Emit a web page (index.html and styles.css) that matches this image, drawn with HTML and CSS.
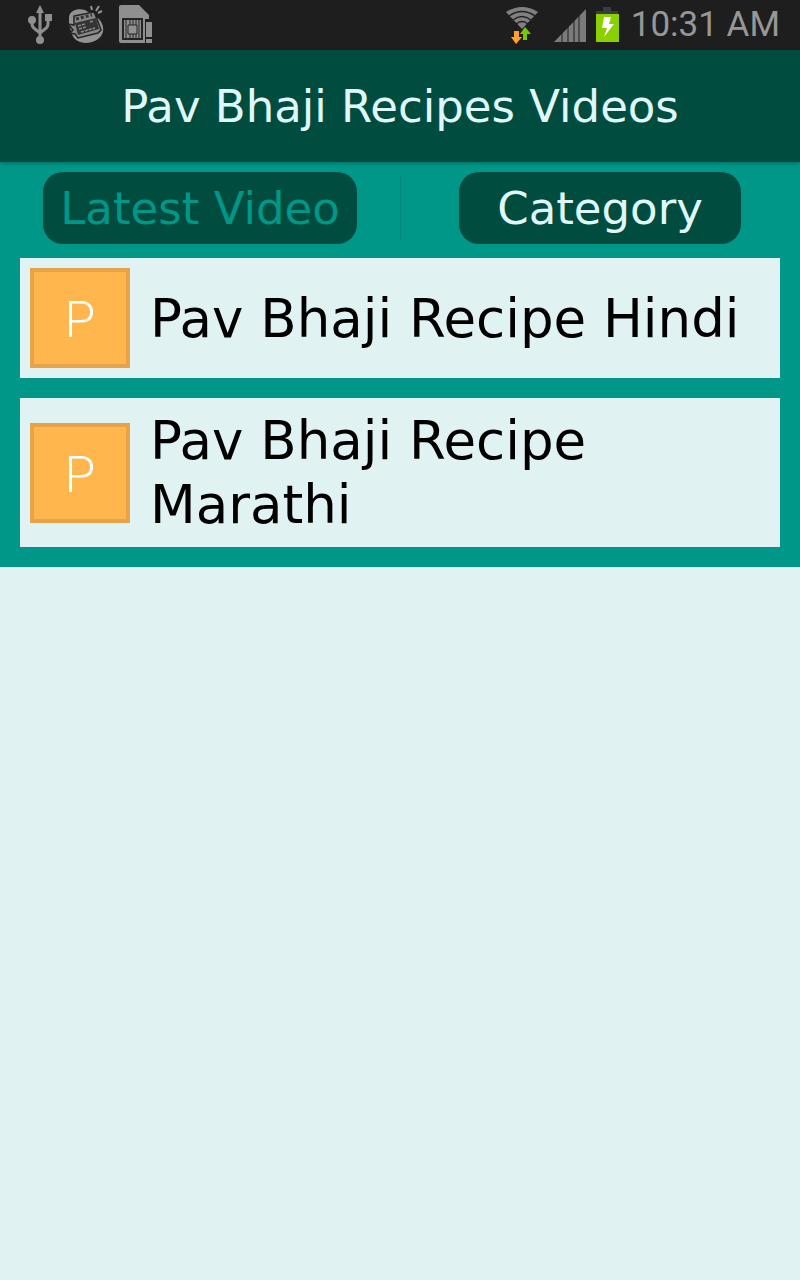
FILE: index.html
```
<!DOCTYPE html>
<html lang="en">
<head>
  <meta charset="UTF-8">
  <meta name="viewport" content="width=device-width, initial-scale=1.0">
  <title>Pav Bhaji Recipes Videos</title>
  <link rel="stylesheet" href="styles.css">
</head>
<body>
  <div class="status-bar">
    <div class="status-left">
      <!-- usb -->
      <svg width="24" height="40" viewBox="0 0 24 40" fill="#8f8f8f" stroke="#8f8f8f">
        <path d="M12 0l4 8H8z" stroke="none"/>
        <path d="M12 6v28M4 15v4q0 3 3 5l5 4M20 13v6q0 3-3 5l-5 4" fill="none" stroke-width="3"/>
        <circle cx="4" cy="15" r="4" stroke="none"/>
        <path d="M17 9h7v7h-7z" stroke="none"/>
        <circle cx="12" cy="35" r="4" stroke="none"/>
      </svg>
      <!-- newspaper -->
      <svg width="40" height="40" viewBox="0 0 40 40">
        <path d="M4 12C5 5 13 3 20 5L34 14C42 23 38 34 27 37C18 40 9 36 7 29L4 20z" fill="#929292"/>
        <path d="M9 11L29 7L32 14L36 25L33 28L13 33L10 29L5 28L8 25L3 19L9 20z" fill="#878787" stroke="#242424" stroke-width="1.5"/>
        <path d="M10 18L31 13L34 24L13 30z" fill="#343434"/>
        <path d="M11 14l16-4M13 21l7-2M14 24l7-2M16 27l14-4M25 17l4-1" stroke="#8a8a8a" stroke-width="1.5" stroke-dasharray="3 1" fill="none"/>
        <path d="M11 14l16-4" stroke="#343434" stroke-width="3" stroke-dasharray="3 2"/>
        <path d="M27 5l-1-4M31 6l3-5M33 8l4-2" stroke="#929292" stroke-width="2" fill="none"/>
      </svg>
      <!-- sim card -->
      <svg width="36" height="40" viewBox="0 0 36 40">
        <path d="M3 0h18l10 10v4h-4v24H3q-2 0-2-2V2q0-2 2-2z" fill="#8f8f8f"/>
        <path d="M5 14h19v20H5z" fill="#8f8f8f" stroke="#242424" stroke-width="2"/>
        <path d="M8 14v20M21 14v20M12 14v6M15 14v6M18 14v6M12 29v5M15 29v5M18 29v5" stroke="#242424" stroke-width="1"/>
        <path d="M10 20h9v9h-9z" fill="#929292" stroke="#242424"/>
        <path d="M28 17h6v15h-6zM28 34h6v4h-6z" fill="#8f8f8f"/>
      </svg>
    </div>
    <div class="status-right">
      <!-- wifi with traffic arrows -->
      <svg width="34" height="40" viewBox="0 0 34 40">
        <path d="M1 7q16-10 32 0L17 24z" fill="#808080"/>
        <path d="M4 11q13-9 26 0M8 15q9-7 18 0M11 19q6-5 12 0" fill="none" stroke="#1e1e1e" stroke-width="1.5"/>
        <path d="M9 26h5v6h3l-6 7-5-7h3z" fill="#ffa030"/>
        <path d="M18 35h4v-6h4l-6-7-5 7h3z" fill="#78c800"/>
      </svg>
      <!-- signal -->
      <svg class="signal" width="34" height="40" viewBox="0 0 34 40">
        <path d="M1 37L33 4v33z" fill="#7b7b7b"/>
        <path d="M9 24v14M15 18v20M21 12v26M26 6v32" stroke="#1e1e1e"/>
      </svg>
      <!-- battery -->
      <svg class="battery" width="24" height="40" viewBox="0 0 24 40">
        <path d="M8 2h8v4h7v4H1V6h7z" fill="#3c3c42"/>
        <path d="M1 9h23v28H1z" fill="#8bd000"/>
        <path d="M9 12h7l-2 7h5L9 32l3-9H7z" fill="#fff"/>
      </svg>
      <span class="clock">10:31 AM</span>
    </div>
  </div>

  <header class="app-bar">
    <h1>Pav Bhaji Recipes Videos</h1>
  </header>

  <main class="content">
    <nav class="tabs">
      <div class="tab">
        <button class="tab-btn active" type="button">Latest Video</button>
      </div>
      <div class="tab">
        <button class="tab-btn wide" type="button">Category</button>
      </div>
    </nav>

    <ul class="video-list">
      <li class="video">
        <span class="avatar">P</span>
        <span class="name">Pav Bhaji Recipe Hindi</span>
      </li>
      <li class="video">
        <span class="avatar">P</span>
        <span class="name">Pav Bhaji Recipe Marathi</span>
      </li>
    </ul>
  </main>
</body>
</html>
```
FILE: styles.css
```
* {
  box-sizing: border-box;
}

body {
  margin: 0;
  min-height: 100vh;
  background-color: #e0f2f1;
  font-family: "DejaVu Sans", sans-serif;
}

.status-bar {
  display: flex;
  justify-content: space-between;
  align-items: center;
  height: 50px;
  padding: 0 20px 0 28px;
  background-color: #1e1e1e;
}

.status-left {
  display: flex;
  gap: 13px;
}

.status-right {
  display: flex;
  align-items: center;
}

.signal {
  margin-left: 14px;
}

.battery {
  margin-left: 8px;
}

.clock {
  margin-left: 12px;
  color: #979797;
  font-family: Roboto, sans-serif;
  font-size: 35px;
  line-height: 50px;
}

.app-bar {
  position: relative;
  display: flex;
  justify-content: center;
  align-items: center;
  height: 112px;
  padding-top: 2px;
  background-color: #004d40;
  box-shadow: 0 1px 4px rgba(0, 0, 0, 0.3);
}

h1 {
  margin: 0;
  color: #e0f7fa;
  font-size: 45px;
  font-weight: normal;
  line-height: 60px;
}

.content {
  padding: 10px 20px 20px;
  background-color: #009688;
}

.tabs {
  display: flex;
  margin: 0 -20px 14px;
}

.tab {
  flex: 1;
  display: flex;
  justify-content: center;
}

.tab + .tab {
  background: linear-gradient(#008578, #008578) left center / 1px 64px no-repeat;
}

.tab-btn {
  height: 72px;
  padding: 0 17px;
  border: none;
  border-radius: 20px;
  background-color: #004d40;
  color: #e0f7fa;
  font-family: inherit;
  font-size: 45px;
  cursor: pointer;
}

.tab-btn.active {
  color: #009688;
}

.tab-btn.wide {
  padding: 0 38px;
}

.video-list {
  display: flex;
  flex-direction: column;
  gap: 20px;
  margin: 0;
  padding: 0;
  list-style: none;
}

.video {
  display: flex;
  align-items: center;
  gap: 20px;
  padding: 10px;
  background-color: #e0f2f1;
}

.avatar {
  flex: none;
  width: 100px;
  height: 100px;
  border: 4px solid #e6a347;
  background-color: #ffb74d;
  color: #fff;
  font-family: Roboto, sans-serif;
  font-size: 50px;
  font-weight: 300;
  line-height: 96px;
  text-align: center;
}

.name {
  padding-top: 1px;
  color: #000;
  font-size: 53px;
  line-height: 64px;
}
```
